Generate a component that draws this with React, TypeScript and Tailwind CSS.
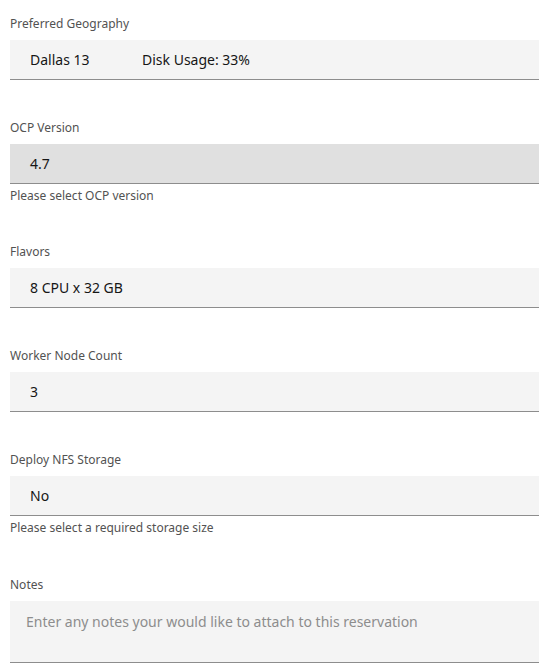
const font = { fontFamily: '"Noto Sans", "Open Sans", sans-serif' };

function Label({ children }: { children: React.ReactNode }) {
  return <div className="mb-2 text-[12px] leading-4 text-[#525252]">{children}</div>;
}

function Helper({ children }: { children: React.ReactNode }) {
  return <div className="mt-1 text-[12px] leading-4 text-[#525252]">{children}</div>;
}

function SelectField({ children, hover }: { children: React.ReactNode; hover?: boolean }) {
  return (
    <div
      className={`flex h-10 items-center border-b border-[#8d8d8d] pl-5 pr-12 text-[14px] text-[#161616] ${
        hover ? 'bg-[#e0e0e0]' : 'bg-[#f4f4f4]'
      }`}
    >
      {children}
    </div>
  );
}

export default function App() {
  return (
    <div className="min-h-screen bg-white pl-[10px] pt-4" style={font}>
      <div className="mb-10">
        <Label>Preferred Geography</Label>
        <SelectField>
          <span className="w-[112px]">Dallas 13</span>
          <span>Disk Usage: 33%</span>
        </SelectField>
      </div>

      <div className="mb-10">
        <Label>OCP Version</Label>
        <SelectField hover>4.7</SelectField>
        <Helper>Please select OCP version</Helper>
      </div>

      <div className="mb-10">
        <Label>Flavors</Label>
        <SelectField>8 CPU x 32 GB</SelectField>
      </div>

      <div className="mb-10">
        <Label>Worker Node Count</Label>
        <SelectField>3</SelectField>
      </div>

      <div className="mb-10">
        <Label>Deploy NFS Storage</Label>
        <SelectField>No</SelectField>
        <Helper>Please select a required storage size</Helper>
      </div>

      <div className="pt-px">
        <Label>Notes</Label>
        <div className="h-[62px] border-b border-[#8d8d8d] bg-[#f4f4f4] px-4 pt-[11px] text-[14px] leading-5 text-[#8d8d8d]">
          Enter any notes your would like to attach to this reservation
        </div>
      </div>
    </div>
  );
}
